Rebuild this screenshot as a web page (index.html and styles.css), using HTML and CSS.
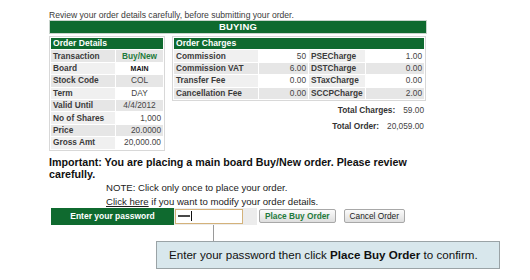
FILE: index.html
```html
<!DOCTYPE html>
<html>
<head>
<meta charset="utf-8">
<link rel="stylesheet" href="styles.css">
</head>
<body>
<div class="page">
  <div class="intro">Review your order details carefully, before submitting your order.</div>
  <div class="bar">BUYING</div>
  <div class="tables">
    <table class="grid details">
      <tr><th colspan="2">Order Details</th></tr>
      <tr class="odd"><td class="lbl">Transaction</td><td class="val c buy">Buy/New</td></tr>
      <tr class="even"><td class="lbl">Board</td><td class="val c main">MAIN</td></tr>
      <tr class="odd"><td class="lbl">Stock Code</td><td class="val c">COL</td></tr>
      <tr class="even"><td class="lbl">Term</td><td class="val c">DAY</td></tr>
      <tr class="odd"><td class="lbl">Valid Until</td><td class="val c">4/4/2012</td></tr>
      <tr class="even"><td class="lbl">No of Shares</td><td class="val r">1,000</td></tr>
      <tr class="odd"><td class="lbl">Price</td><td class="val r">20.0000</td></tr>
      <tr class="even"><td class="lbl">Gross Amt</td><td class="val r">20,000.00</td></tr>
    </table>
    <div class="rightcol">
      <table class="grid charges">
        <tr><th colspan="4">Order Charges</th></tr>
        <tr class="even"><td class="lbl w1">Commission</td><td class="val r w2">50</td><td class="lbl w3">PSECharge</td><td class="val r">1.00</td></tr>
        <tr class="odd"><td class="lbl">Commission VAT</td><td class="val r">6.00</td><td class="lbl">DSTCharge</td><td class="val r">0.00</td></tr>
        <tr class="even"><td class="lbl">Transfer Fee</td><td class="val r">0.00</td><td class="lbl">STaxCharge</td><td class="val r">0.00</td></tr>
        <tr class="odd"><td class="lbl">Cancellation Fee</td><td class="val r">0.00</td><td class="lbl">SCCPCharge</td><td class="val r">2.00</td></tr>
      </table>
      <div class="totals">
        <div class="trow"><span class="tl">Total Charges:</span><span class="tv">59.00</span></div>
        <div class="trow"><span class="tl">Total Order:</span><span class="tv">20,059.00</span></div>
      </div>
    </div>
  </div>
  <div class="important">Important: You are placing a main board Buy/New order. Please review carefully.</div>
  <div class="note">NOTE: Click only once to place your order.</div>
  <div class="note"><a class="link" href="#">Click here</a> if you want to modify your order details.</div>
  <div class="pwrow">
    <div class="pwlabel">Enter your password</div>
    <div class="pwcell"><div class="pwinput"><span class="dots"></span><span class="caret"></span></div></div>
    <button class="btn place">Place Buy Order</button>
    <button class="btn cancel">Cancel Order</button>
  </div>
  <div class="callwrap">
    <div class="stem"></div>
    <div class="callout"><span>Enter your password then click <b>Place Buy Order</b> to confirm.</span></div>
  </div>
</div>
</body>
</html>
```
FILE: styles.css
```css
html, body { margin: 0; padding: 0; background: #fff; }
body { font-family: "Liberation Sans", Arial, sans-serif; color: #333; }
.page { padding: 10px 0 0 49px; width: 378px; }
.intro { font-size: 8.6px; line-height: 10px; color: #3a3a3a; height: 10px; }
.bar { background: #0f6a2f; border: 1px solid #c8d4cc; color: #fff; font-weight: bold; font-size: 9.5px; line-height: 12px; height: 12px; text-align: center; letter-spacing: 0.2px; }
.tables { display: flex; gap: 7px; margin-top: 2px; align-items: flex-start; }
.grid { border-collapse: separate; border-spacing: 1px; background: #fff; border: 1px solid #d8d8d8; font-size: 8.3px; }
.grid th { background: #0f6a2f; color: #fff; text-align: left; font-weight: bold; height: 11.4px; padding: 0 2px; line-height: 11px; font-size: 8.6px; }
.grid td { height: 11.4px; padding: 0 2px; line-height: 11px; white-space: nowrap; }
.details { width: 116px; }
.details .lbl { width: 60px; }
.lbl { font-weight: bold; color: #3b3b3b; }
.odd td { background: #e6e6e6; }
.even td.lbl { background: #f0f0f0; }
.even td.val { background: #fff; }
.val { color: #444; }
.c { text-align: center; }
.r { text-align: right; }
.buy { color: #1f7a3c; font-weight: bold; }
.main { font-weight: bold; color: #111; font-size: 7px; }
.rightcol { display: flex; flex-direction: column; }
.charges { width: 254px; }
.charges .w1 { width: 80px; }
.charges .w2 { width: 45px; }
.charges .w3 { width: 52px; }
.totals { display: flex; flex-direction: column; align-items: flex-end; padding-right: 2px; margin-top: 4px; gap: 5px; font-size: 8.3px; }
.trow { display: flex; gap: 8px; line-height: 11px; }
.tl { font-weight: bold; color: #333; }
.tv { color: #444; }
.important { margin-top: 5px; font-size: 10.7px; font-weight: bold; color: #111; line-height: 12px; width: 365px; }
.note { padding-left: 57px; font-size: 9.6px; line-height: 13px; color: #222; margin-top: 1px; }
.link { color: #222; }
.pwrow { display: flex; align-items: stretch; margin-top: 0; margin-left: 2px; height: 17px; }
.pwlabel { width: 123px; background: #0f6a2f; color: #fff; font-weight: bold; font-size: 8.5px; display: flex; align-items: center; justify-content: center; }
.pwcell { background: #ececec; width: 82px; padding: 0 0 0 1px; display: flex; align-items: center; }
.pwinput { width: 64px; height: 13px; border: 1px solid #d4b27a; background: #fff; box-sizing: content-box; padding-left: 2px; color: #333; display: flex; align-items: center; }
.dots { display: block; width: 12px; height: 2px; background-image: radial-gradient(circle, #444 0.7px, transparent 1px); background-size: 2px 2px; }
.caret { width: 1px; height: 10px; background: #111; margin-left: 1px; }
.btn { font-family: "Liberation Sans", Arial, sans-serif; font-size: 8.3px; height: 14px; padding: 0 5px; margin: 1px 0 0 0; border: 1px solid #a8a8a8; border-radius: 2px; background: linear-gradient(#fbfbfb, #dedede); align-self: flex-start; }
.place { color: #1f7a3c; font-weight: bold; margin-left: 2px; }
.cancel { color: #222; margin-left: 8px; }
.callwrap { position: relative; height: 45px; }
.stem { position: absolute; left: 164px; top: 0; width: 1px; height: 16px; background: #9a9a9a; }
.callout { position: absolute; left: 107px; top: 16px; width: 330px; height: 26px; background: #d8e7ec; border: 1px solid #9aa3a6; font-size: 11.6px; line-height: 26px; color: #111; padding-left: 12px; box-sizing: content-box; }
```
